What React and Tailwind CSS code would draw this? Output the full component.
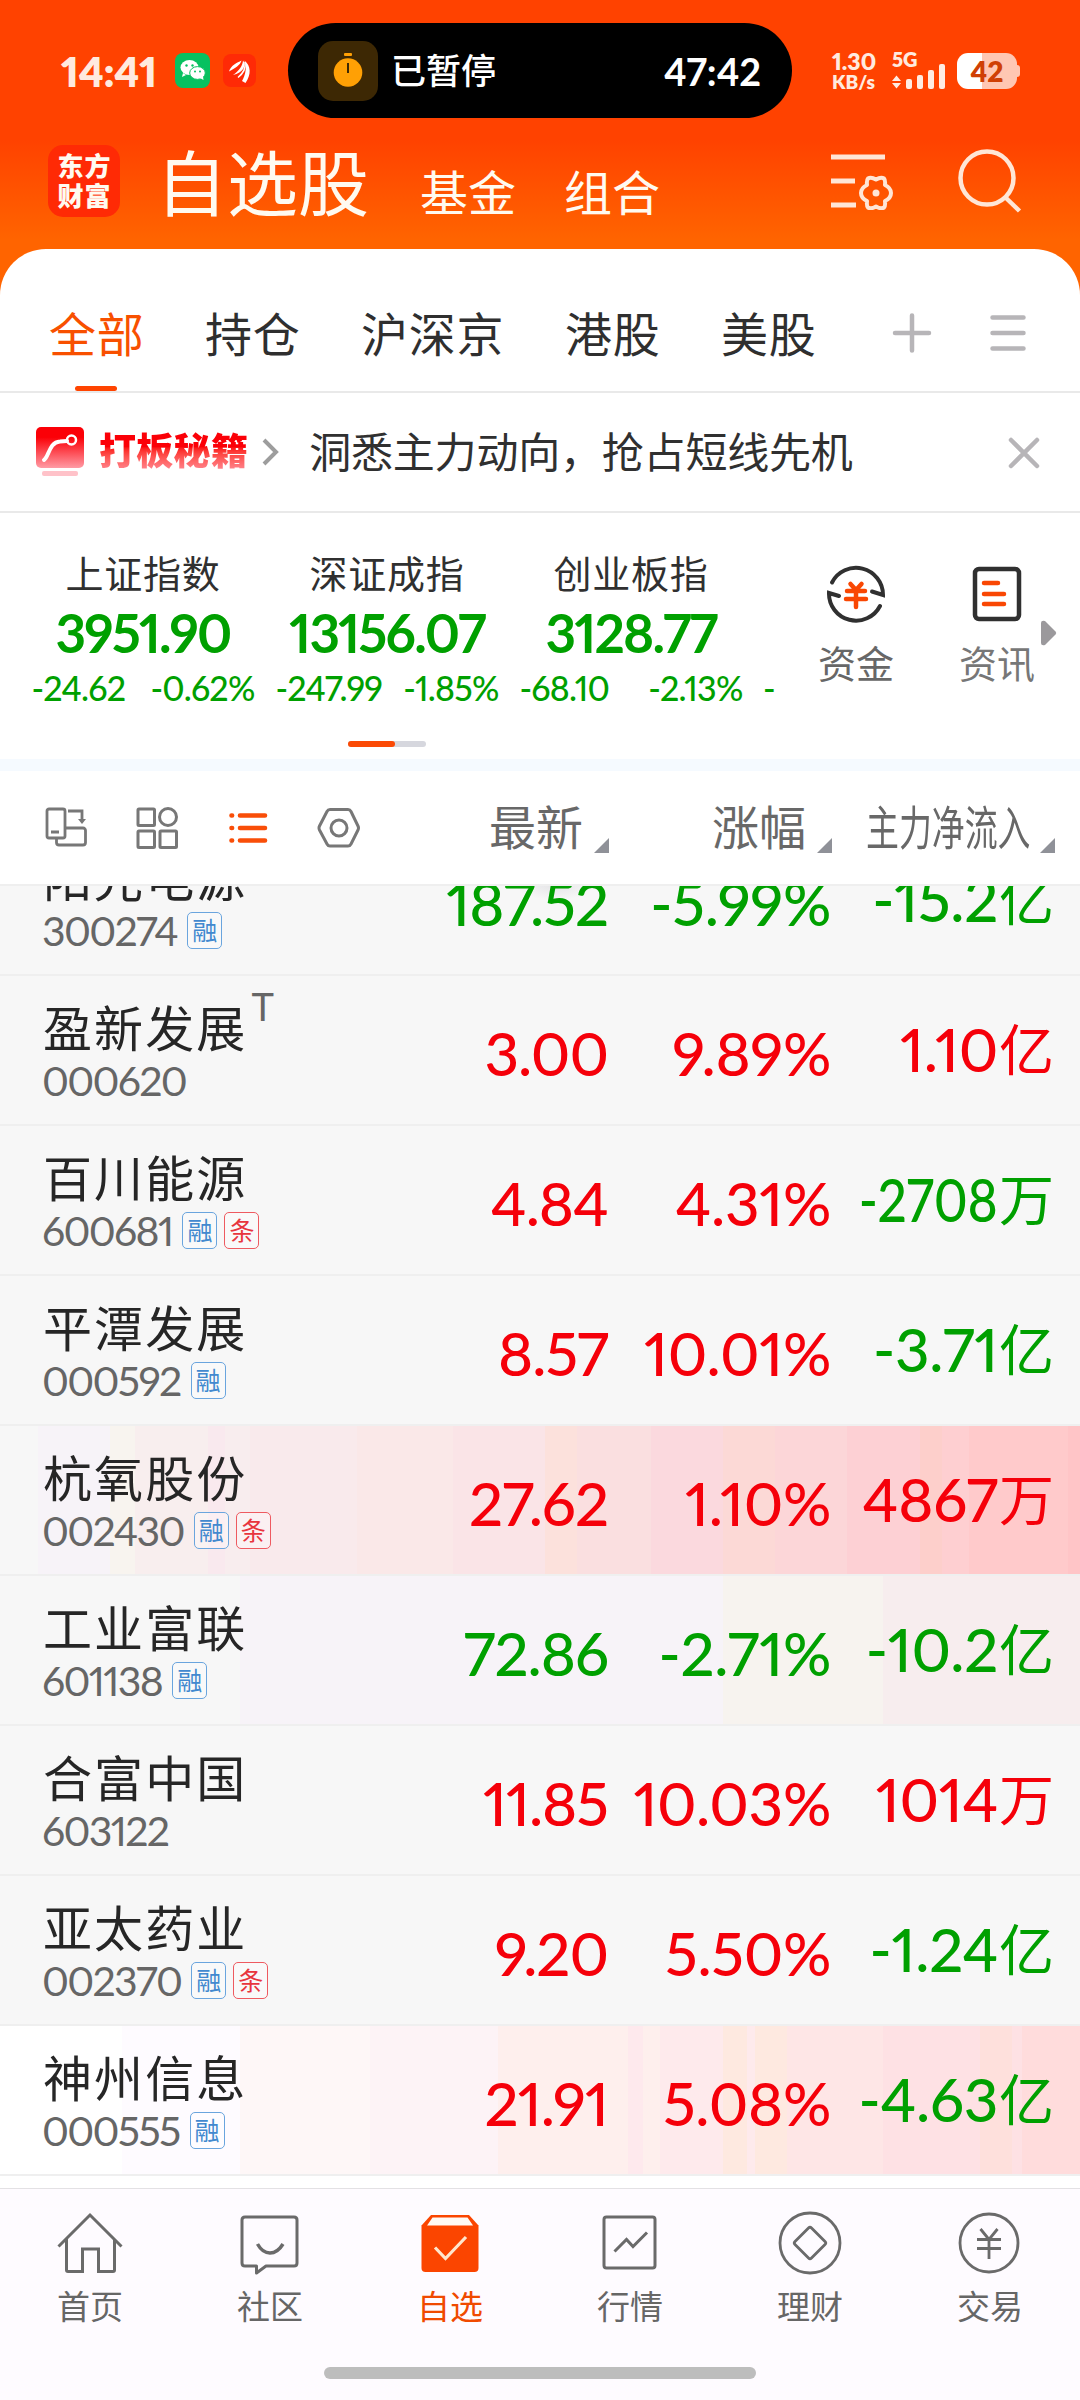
import React from 'react';
import clsx from 'clsx';

const tabs = ['全部', '持仓', '沪深京', '港股', '美股'];

const indexes = [
    { name: '上证指数', value: '3951.90', diff: '-24.62', pct: '-0.62%' },
    { name: '深证成指', value: '13156.07', diff: '-247.99', pct: '-1.85%' },
    { name: '创业板指', value: '3128.77', diff: '-68.10', pct: '-2.13%' },
];

const stocks = [
    { name: '盈新发展', code: '000620', price: '3.00', pct: '9.89%', flow: '1.10', unit: '亿', up: true, flowUp: true, tags: [], sup: 'T' },
    { name: '百川能源', code: '600681', price: '4.84', pct: '4.31%', flow: '-2708', unit: '万', up: true, flowUp: false, tags: ['融', '条'], tight: true },
    { name: '平潭发展', code: '000592', price: '8.57', pct: '10.01%', flow: '-3.71', unit: '亿', up: true, flowUp: false, tags: ['融'] },
    {
        name: '杭氧股份', code: '002430', price: '27.62', pct: '1.10%', flow: '4867', unit: '万', up: true, flowUp: true, tags: ['融', '条'],
        bg: 'bg-[linear-gradient(90deg,#f7f7f7_38px,#f7f3f8_38px_110px,#f8f4ef_110px_135px,#f8eeee_135px_208px,#f9e9ee_208px_225px,#f8edee_225px_250px,#f9eaec_250px_357px,#fae8e8_357px_453px,#fae4e7_453px_545px,#fce1dc_545px_577px,#fadfe0_577px_651px,#fbd9de_651px_723px,#fcd9d6_723px_775px,#fcd6d8_775px_847px,#fdd0d4_847px_920px,#fdcfcb_920px_942px,#fecfd1_942px_969px,#ffcacb_969px_1068px,#ffc5c7_1068px)]',
    },
    {
        name: '工业富联', code: '601138', price: '72.86', pct: '-2.71%', flow: '-10.2', unit: '亿', up: false, flowUp: false, tags: ['融'],
        bg: 'bg-[linear-gradient(90deg,#f7f7f7_240px,#f7f3f8_240px_723px,#f7f3ef_723px_883px,#f7edee_883px)]',
    },
    { name: '合富中国', code: '603122', price: '11.85', pct: '10.03%', flow: '1014', unit: '万', up: true, flowUp: true, tags: [] },
    { name: '亚太药业', code: '002370', price: '9.20', pct: '5.50%', flow: '-1.24', unit: '亿', up: true, flowUp: false, tags: ['融', '条'] },
    {
        name: '神州信息', code: '000555', price: '21.91', pct: '5.08%', flow: '-4.63', unit: '亿', up: true, flowUp: false, tags: ['融'],
        bg: 'bg-[linear-gradient(90deg,#ffffff_122px,#fefbff_122px_240px,#fef7f7_240px_370px,#fdf3f6_370px_498px,#feefed_498px_628px,#fee9ed_628px_643px,#feefed_643px_660px,#feeaec_660px_723px,#fee9e0_723px_747px,#feeaec_747px_755px,#fee9e0_755px_787px,#fee6e6_787px_883px,#fee1e4_883px_980px,#fee0dc_980px_1012px,#fee1e4_1012px_1022px,#ffdcdc_1022px)]',
    },
];

const WechatIcon = () => (
    <svg className="size-[35px]" viewBox="0 0 35 35">
        <rect width="35" height="35" rx="8" fill="#07c160" />
        <ellipse cx="14.5" cy="14.5" rx="9" ry="7.5" fill="#fff" />
        <path d="M8 20l-1 4 4-2z" fill="#fff" />
        <ellipse cx="22.5" cy="20" rx="7.8" ry="6.4" fill="#fff" stroke="#07c160" strokeWidth="1" />
        <path d="M25 25l3.5 2-.5-3.5z" fill="#fff" />
        <circle cx="11.5" cy="12.5" r="1.2" fill="#07c160" />
        <circle cx="17.5" cy="12.5" r="1.2" fill="#07c160" />
        <circle cx="20" cy="18.5" r="1" fill="#07c160" />
        <circle cx="25" cy="18.5" r="1" fill="#07c160" />
    </svg>
);

const WingIcon = () => (
    <svg className="size-[33px]" viewBox="0 0 33 33">
        <rect width="33" height="33" rx="8" fill="#ff2a06" />
        <path d="M6 17.500C8 11 14 9 18.500 6.500C17.500 11 12 14 6 17.500Z" fill="#fff" />
        <path d="M10 21C16 17 19.500 12 20 6.500C24 11 20 19 10 21Z" fill="#fff" />
        <path d="M19 27C22.500 21 24 14 21.500 6.500C28 12 28.500 20 22.500 29Z" fill="#fff" />
        <path d="M15 23.500C20 19.500 23 14 22 8" fill="none" stroke="#fff" strokeWidth="1.500" />
    </svg>
);

const TimerIcon = () => (
    <svg className="size-[60px]" viewBox="0 0 60 60">
        <rect width="60" height="60" rx="15" fill="#3d2804" />
        <circle cx="30" cy="31.500" r="14.300" fill="#ffa005" />
        <rect x="26" y="12" width="8" height="3" rx="1" fill="#ffa005" />
        <path d="M30 22v10" stroke="#3d2804" strokeWidth="2" />
    </svg>
);

const SignalIcon = () => (
    <svg className="h-[25px] w-[54px]" viewBox="0 0 54 25" fill="#ffece2">
        <path d="M0 17L4.500 11.500 9 17zM0 19h9l-4.500 5.500z" />
        <rect x="14" y="15" width="6" height="10" rx="2" />
        <rect x="25" y="11" width="6" height="14" rx="2" />
        <rect x="36" y="6" width="6" height="19" rx="2" />
        <rect x="47" y="0" width="6" height="25" rx="2" />
    </svg>
);

const FilterIcon = () => (
    <svg className="h-[56px] w-[64px]" viewBox="0 0 64 56" fill="none" stroke="#ffe6d6" strokeWidth="5">
        <path d="M0 3h54M0 27h24M0 51h25" />
        <path
            d="M37 24.500Q40 22.500 45 25.500Q50 22.500 53 24.500Q54.500 26 54 31Q60 34 60 39Q60 44 54 47Q54.500 52 53 53.500Q50 55.500 45 52.500Q40 55.500 37 53.500Q35.500 52 36 47Q30 44 30 39Q30 34 36 31Q35.500 26 37 24.500Z"
            strokeWidth="4"
            strokeLinejoin="round"
        />
        <circle cx="45" cy="39" r="3.500" fill="#ffe6d6" stroke="none" />
    </svg>
);

const SearchIcon = () => (
    <svg className="size-[64px]" viewBox="0 0 64 64" fill="none" stroke="#ffe6d6" strokeWidth="4.500">
        <circle cx="29" cy="29" r="26.500" />
        <path d="M47.500 48.500l14 13.500" />
    </svg>
);

const StatusBar = () => (
    <div className="flex h-[141px] items-start pt-[23px] text-[#ffeadf]">
        <div className="flex h-[95px] w-[288px] items-center pl-[61px]">
            <span className="w-[114px] text-[42px] leading-none font-extrabold tracking-[-0.300px]">14:41</span>
            <WechatIcon />
            <span className="ml-[13px]"><WingIcon /></span>
        </div>
        <div className="flex h-[95px] w-[504px] items-center rounded-full bg-black pr-[31px] pl-[30px] text-white">
            <TimerIcon />
            <span className="ml-[13px] text-[35px] leading-none font-medium">已暂停</span>
            <span className="ml-auto text-[38px] leading-none font-bold">47:42</span>
        </div>
        <div className="flex h-[95px] items-center pl-[40px]">
            <div className="flex w-[60px] flex-col pt-[1px] font-extrabold">
                <span className="text-[23px] leading-[21px]">1.30</span>
                <span className="text-[19px] leading-[19px]">KB/s</span>
            </div>
            <div className="flex w-[65px] flex-col">
                <span className="h-[12px] text-[20px] leading-[14px] font-extrabold">5G</span>
                <SignalIcon />
            </div>
            <div className="flex h-[36px] w-[60px] items-center justify-center rounded-[11px] bg-[linear-gradient(90deg,#ffffff_25px,#ffc7b3_25px)] text-[28px] leading-none font-extrabold text-[#d04005]">
                42
            </div>
            <div className="h-[12px] w-[3px] rounded-r bg-[#ffc7b3]" />
        </div>
    </div>
);

const TitleBar = () => (
    <div className="flex h-[108px] items-start pl-[48px] text-[#fffaf0]">
        <div className="mt-[4px] grid size-[72px] grid-cols-2 content-center justify-center rounded-[15px] bg-[#ff2a05] px-[9px] text-center text-[26px] leading-[30px] font-black">
            <span>东</span>
            <span>方</span>
            <span>财</span>
            <span>富</span>
        </div>
        <span className="mt-[6px] ml-[36px] w-[264px] text-[71px] leading-none whitespace-nowrap">自选股</span>
        <span className="mt-[28px] w-[144px] text-[48px] leading-none">基金</span>
        <span className="mt-[28px] w-[267px] text-[48px] leading-none">组合</span>
        <span className="mt-[13px] w-[127px]"><FilterIcon /></span>
        <span className="mt-[8px]"><SearchIcon /></span>
    </div>
);

const Tabs = () => (
    <div className="flex h-[144px] border-b-2 border-[#e9e9e9] pt-[62px] pl-[49px]">
        {tabs.map((tab, i) => (
            <div key={tab} className={clsx('flex flex-col', i === 2 ? 'w-[204px]' : 'w-[156px]', i === 0 ? 'text-[#f85000]' : 'text-[#2f2f2f]')}>
                <span className="text-[47px] leading-none tracking-[0.800px]">{tab}</span>
                {i === 0 && <span className="mt-[28px] ml-[26px] h-[6px] w-[42px] rounded-full bg-[#ff4400]" />}
            </div>
        ))}
        <svg className="mt-[2px] ml-[15px] size-[40px]" viewBox="0 0 40 40" stroke="#b7b5b8" strokeWidth="4.500" strokeLinecap="round">
            <path d="M20 2.500v35M3 20h34" />
        </svg>
        <svg className="mt-[2px] ml-[56px] size-[40px]" viewBox="0 0 40 40" stroke="#b7b5b8" strokeWidth="4.500" strokeLinecap="round">
            <path d="M4.500 4.500h31M4.500 20h31M4.500 35.500h31" />
        </svg>
    </div>
);

const Promo = () => (
    <div className="flex h-[120px] items-center border-b-2 border-[#e9e9e9] pl-[36px]">
        <svg className="h-[50px] w-[48px]" viewBox="0 0 48 50">
            <defs>
                <linearGradient id="promo" x1="0" y1="0" x2="0" y2="1">
                    <stop offset="0.250" stopColor="#fb0007" />
                    <stop offset="1" stopColor="#ff9ba5" />
                </linearGradient>
            </defs>
            <rect width="48" height="41" rx="5" fill="url(#promo)" />
            <path d="M8 33C13 30 13 15 24 14.500L31 14" fill="none" stroke="#fff" strokeWidth="4" strokeLinecap="round" />
            <circle cx="35.500" cy="13" r="4.500" fill="none" stroke="#fff" strokeWidth="2.500" />
            <rect x="6" y="44" width="36" height="5" rx="2" fill="#ffc2c9" />
        </svg>
        <span className="mb-[3px] ml-[15px] bg-gradient-to-b from-[#fb0007] from-40% to-[#ff8a95] bg-clip-text text-[37px] leading-[42px] font-black tracking-[0.300px] text-transparent">
            打板秘籍
        </span>
        <svg className="ml-[14px] h-[28px] w-[18px]" viewBox="0 0 18 28" fill="none" stroke="#9d9d9d" strokeWidth="4">
            <path d="M2 2l12 12L2 26" />
        </svg>
        <span className="ml-[29px] text-[42px] leading-none tracking-[-0.200px] text-[#303030]">洞悉主力动向，抢占短线先机</span>
        <svg className="mt-[2px] mr-[39px] ml-auto size-[34px]" viewBox="0 0 34 34" stroke="#b7b5b8" strokeWidth="4.500" strokeLinecap="round">
            <path d="M4 4l26 26M30 4L4 30" />
        </svg>
    </div>
);

const FundsIcon = () => (
    <svg className="size-[60px]" viewBox="0 0 60 60" fill="none" stroke="#303030" strokeWidth="4">
        <path d="M6 18.500A27 27 0 0 1 57 31L46 27.500" strokeLinecap="round" />
        <path d="M54 42A27 27 0 0 1 3 29L13 32" strokeLinecap="round" />
        <path d="M24.500 20l5.500 6 5.500-6M21 27h18M20 35h20M30 26v17" stroke="#f94703" strokeWidth="4.500" strokeLinecap="round" />
    </svg>
);

const NewsIcon = () => (
    <svg className="size-[60px]" viewBox="0 0 60 60" fill="none" strokeWidth="4.500">
        <rect x="8" y="5" width="44" height="50" rx="4" stroke="#303030" />
        <path d="M17 19h14M17 30h20M17 40h20" stroke="#f94703" strokeLinecap="round" />
    </svg>
);

const IndexPanel = () => (
    <div className="h-[246px]">
        <div className="flex h-[227px]">
            <div className="flex w-[776px] overflow-hidden pt-[39px] pl-[21px] text-[#00a000]">
                {indexes.map((item) => (
                    <div key={item.name} className="flex w-[244px] shrink-0 flex-col items-center">
                        <span className="text-[38px] leading-[42px] tracking-[0.700px] text-[#303030]">{item.name}</span>
                        <span className="mt-[11px] text-[53px] leading-[56px] font-bold tracking-[-1.800px]">{item.value}</span>
                        <div className="mt-[9px] flex w-[223px] justify-between text-[34px] leading-[36px] font-medium tracking-[-0.800px]">
                            <span>{item.diff}</span>
                            <span>{item.pct}</span>
                        </div>
                    </div>
                ))}
                <span className="mt-[118px] ml-[10px] text-[34px] leading-[36px] font-medium">-</span>
            </div>
            <div className="flex w-[160px] flex-col items-center pt-[51px]">
                <FundsIcon />
                <span className="mt-[20px] text-[38px] leading-none text-[#676767]">资金</span>
            </div>
            <div className="flex w-[105px] flex-col items-end pt-[51px]">
                <span className="mr-[14px]"><NewsIcon /></span>
                <span className="mt-[20px] mr-[6px] text-[38px] leading-none text-[#777]">资讯</span>
            </div>
            <svg className="mt-[107px] h-[26px] w-[16px]" viewBox="0 0 16 26" fill="#9b999c">
                <path d="M0 3Q0 0 4 1L14.500 11.500Q16 13 14.500 14.500L4 25Q0 26 0 23Z" />
            </svg>
        </div>
        <div className="mt-[1px] ml-[348px] h-[6px] w-[78px] rounded-full bg-[#d6d7de]">
            <div className="h-full w-[47px] rounded-full bg-[#fb4a05]" />
        </div>
    </div>
);

const SortMark = () => (
    <svg className="mt-[35px] ml-[11px] size-[15px]" viewBox="0 0 15 15" fill="#8f9198">
        <path d="M15 0v15H0z" />
    </svg>
);

const ListHeader = () => (
    <div className="flex h-[115px] items-center border-b-2 border-[#efefef] pl-[45px] text-[#686868]">
        <svg className="size-[44px]" viewBox="0 0 44 44" fill="none" stroke="#777" strokeWidth="2.800">
            <rect x="2" y="3" width="18" height="29" rx="2" />
            <path d="M6 26h8M20 22h18a2.500 2.500 0 0 1 2.500 2.500v12a2.500 2.500 0 0 1-2.500 2.500H14a2.500 2.500 0 0 1-2.500-2.500V32M23 5h14v10" />
            <path d="M33 13h8l-4 5z" fill="#777" stroke="none" />
        </svg>
        <svg className="ml-[46px] size-[44px]" viewBox="0 0 44 44" fill="none" stroke="#777" strokeWidth="3">
            <rect x="3" y="3" width="16.500" height="16.500" rx="1" />
            <circle cx="33" cy="11" r="8.500" />
            <rect x="3" y="25" width="16.500" height="16.500" rx="1" />
            <rect x="25" y="25" width="16.500" height="16.500" rx="1" />
        </svg>
        <svg className="ml-[48px] size-[44px]" viewBox="0 0 44 44" fill="none" stroke="#f94e08" strokeWidth="4.600" strokeLinecap="round">
            <path d="M4.500 9.500h.6M13 9.500h25M4.500 22h.6M13 22h25M4.500 34.500h.6M13 34.500h25" />
        </svg>
        <svg className="ml-[46px] size-[44px]" viewBox="0 0 44 44" fill="none" stroke="#777" strokeWidth="3">
            <path d="M13 3.500h18q2 0 3 2L41 20q1 2 0 4L34 38q-1 2-3 2H13q-2 0-3-2L2.500 24q-1-2 0-4L10 5.500q1-2 3-2z" strokeLinejoin="round" />
            <circle cx="22" cy="22" r="8" />
        </svg>
        <div className="flex w-[248px] items-center justify-end">
            <span className="text-[47px] leading-none">最新</span>
            <SortMark />
        </div>
        <div className="flex w-[223px] items-center justify-end">
            <span className="text-[47px] leading-none">涨幅</span>
            <SortMark />
        </div>
        <div className="flex w-[223px] items-center justify-end">
            <span className="w-[163px]">
                <span className="block w-[235px] origin-left scale-x-70 text-[47px] leading-none">主力净流入</span>
            </span>
            <SortMark />
        </div>
    </div>
);

const Tag = ({ text }) => (
    <span
        className={clsx(
            'flex h-[37px] w-[35px] shrink-0 items-center justify-center rounded-[5px] border bg-white/30 text-[25px] leading-none',
            text === '融' ? 'border-[#6aa5de] text-[#4289cf]' : 'border-[#ee5a60] text-[#e8353d]'
        )}
    >
        {text}
    </span>
);

const StockRow = ({ stock }) => {
    const color = stock.up ? 'text-[#f5000a]' : 'text-[#00a000]';
    const flowColor = stock.flowUp ? 'text-[#f5000a]' : 'text-[#00a000]';

    return (
        <div className={clsx('flex h-[150px] shrink-0 border-b-2 border-[#efefef]', stock.bg || 'bg-[#f7f7f7]')}>
            <div className="w-[367px] pt-[27px] pl-[43px]">
                <div className="flex h-[50px]">
                    <span className="text-[49px] leading-[50px] tracking-[2.100px] text-[#262626]">{stock.name}</span>
                    {stock.sup && <span className="-mt-[16px] ml-[4px] text-[38px] leading-none text-[#666]">{stock.sup}</span>}
                </div>
                <div className="mt-[9px] flex h-[37px] items-center gap-[7px] text-[#666]">
                    <span className="mr-[3px] -ml-px text-[41px] leading-none tracking-[-1.700px]">{stock.code}</span>
                    {stock.tags.map((tag) => <Tag key={tag} text={tag} />)}
                </div>
            </div>
            <span className={clsx('w-[241px] pt-[47px] text-right text-[60px] leading-none font-medium tracking-[-1px]', color)}>{stock.price}</span>
            <span className={clsx('w-[223px] pt-[47px] text-right text-[60px] leading-none font-medium tracking-[-0.300px]', color)}>{stock.pct}</span>
            <span className={clsx('flex w-[223px] justify-end pt-[43px] text-[60px] leading-none whitespace-nowrap', flowColor)}>
                <span className={clsx('inline-block font-medium tracking-[-0.300px]', stock.tight && 'origin-right scale-x-86')}>{stock.flow}</span>
                <span className="mt-[3px] ml-px text-[55px] leading-none">{stock.unit}</span>
            </span>
        </div>
    );
};

const HomeIcon = () => (
    <svg className="size-[66px]" viewBox="0 0 66 66" fill="none" stroke="#6a6a6a" strokeWidth="3">
        <path d="M1.500 35.500L33 4l31.500 31.500" />
        <path d="M9.500 28v31q0 1.500 1.500 1.500h14.500V38h16v22.500H56q1.500 0 1.500-1.500V28" />
    </svg>
);

const CommunityIcon = () => (
    <svg className="size-[66px]" viewBox="0 0 66 66" fill="none" stroke="#6a6a6a" strokeWidth="3">
        <path d="M8 6h49q3 0 3 3v43q0 3-3 3H29l-9.500 7V55H8q-3 0-3-3V9q0-3 3-3z" strokeLinejoin="round" />
        <path d="M20.500 33q5 9 12.500 9t13-9" strokeWidth="3.500" />
    </svg>
);

const WatchIcon = () => (
    <svg className="size-[66px]" viewBox="0 0 66 66">
        <path d="M14 4h38l9.500 10.500V57q0 4-4 4h-49q-4 0-4-4V14.500z" fill="#fb4500" />
        <path d="M15.500 6.500h35L56 14.500H10z" fill="#fffaf5" />
        <path d="M18 36.500l10.500 11L49 26" fill="none" stroke="#ffe6cc" strokeWidth="3.200" />
    </svg>
);

const MarketIcon = () => (
    <svg className="size-[66px]" viewBox="0 0 66 66" fill="none" stroke="#6a6a6a" strokeWidth="3">
        <rect x="7" y="6" width="51" height="51" rx="2.500" />
        <path d="M17.500 40.500L29.500 28.500l6.500 7 14-14" />
    </svg>
);

const WealthIcon = () => (
    <svg className="size-[66px]" viewBox="0 0 66 66" fill="none" stroke="#6a6a6a" strokeWidth="2.800">
        <circle cx="33" cy="32" r="30" />
        <path d="M31.500 17q1.500-1.500 3 0L48 30.500q1.500 1.500 0 3L34.500 47q-1.500 1.500-3 0L18 33.500q-1.500-1.500 0-3z" />
    </svg>
);

const TradeIcon = () => (
    <svg className="size-[66px]" viewBox="0 0 66 66" fill="none" stroke="#6a6a6a" strokeWidth="2.800">
        <circle cx="32" cy="32" r="29" />
        <path d="M23.500 18L32 28.500 40.500 18M20 28.500h24M20 37.500h24M32 28v20" />
    </svg>
);

const navItems = [
    { label: '首页', Icon: HomeIcon },
    { label: '社区', Icon: CommunityIcon },
    { label: '自选', Icon: WatchIcon, active: true },
    { label: '行情', Icon: MarketIcon },
    { label: '理财', Icon: WealthIcon },
    { label: '交易', Icon: TradeIcon },
];

const BottomNav = () => (
    <div className="h-[212px] border-t border-[#e3e1e4] bg-[#fefbff]">
        <div className="flex h-[178px] pt-[22px]">
            {navItems.map(({ label, Icon, active }) => (
                <div key={label} className={clsx('flex w-[180px] flex-col items-center', active ? 'text-[#f04a00]' : 'text-[#666]')}>
                    <Icon />
                    <span className="mt-[13px] text-[33px] leading-none">{label}</span>
                </div>
            ))}
        </div>
        <div className="mx-auto h-[12px] w-[432px] rounded-full bg-[#bdbdbd]" />
    </div>
);

const App = () => (
    <div className="h-[2400px] w-[1080px] overflow-hidden bg-[linear-gradient(180deg,#ff4200_140px,#ff6400_240px)] font-['Lato','Noto_Sans_CJK_SC',sans-serif] proportional-nums">
        <StatusBar />
        <TitleBar />
        <div className="overflow-hidden rounded-t-[46px] bg-white">
            <Tabs />
            <Promo />
            <IndexPanel />
            <div className="h-[12px] bg-[#f5faff]" />
            <ListHeader />
            {/* first row is scrolled half under the header */}
            <div className="flex h-[90px] flex-col justify-end overflow-hidden">
                <StockRow
                    stock={{
                        name: '阳光电源', code: '300274', price: '187.52', pct: '-5.99%', flow: '-15.2', unit: '亿', up: false, flowUp: false, tags: ['融'],
                        bg: 'bg-[#f7f7f7] bg-[radial-gradient(ellipse_40px_16px_at_555px_58px,#e4e4e6,#f7f7f7)]',
                    }}
                />
            </div>
            {stocks.map((stock) => <StockRow key={stock.code} stock={stock} />)}
            <div className="h-[12px]" />
            <BottomNav />
        </div>
    </div>
);

export default App;
